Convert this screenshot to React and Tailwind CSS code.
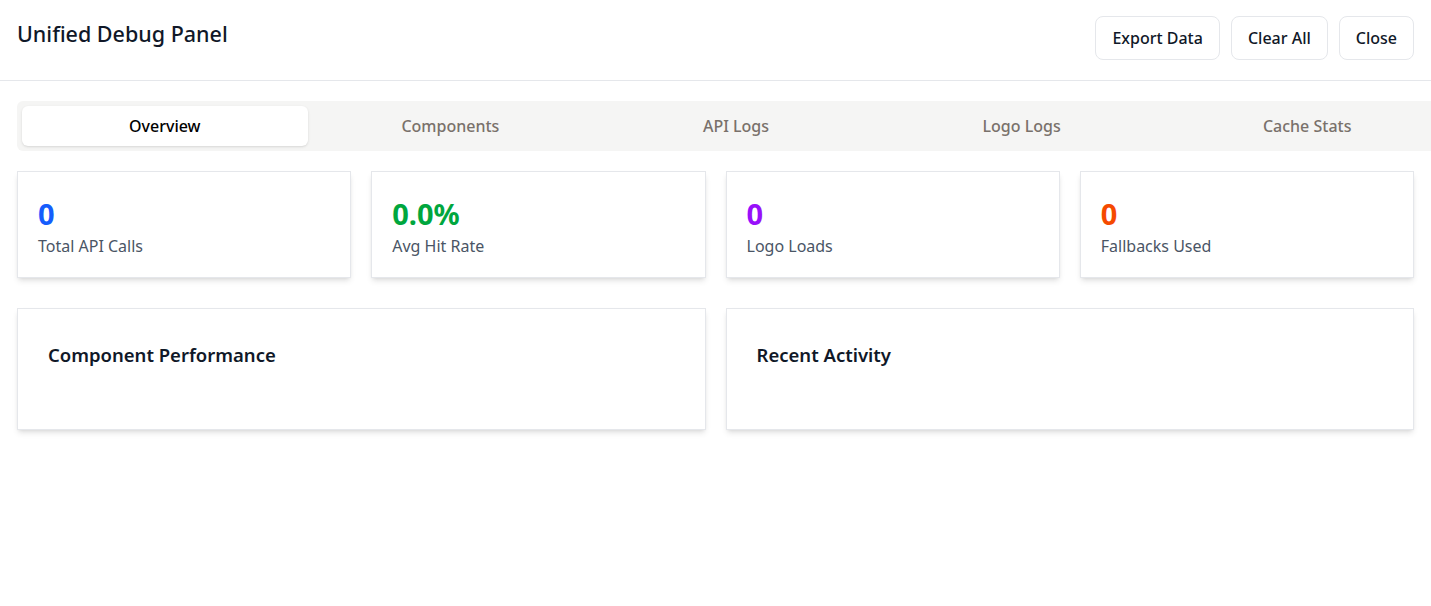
import React, { useState } from 'react';

const tabs = ['Overview', 'Components', 'API Logs', 'Logo Logs', 'Cache Stats'];

const stats = [
    { value: '0', label: 'Total API Calls', color: 'text-blue-600' },
    { value: '0.0%', label: 'Avg Hit Rate', color: 'text-green-600' },
    { value: '0', label: 'Logo Loads', color: 'text-purple-600' },
    { value: '0', label: 'Fallbacks Used', color: 'text-orange-600' },
];

const App = () => {
    const [activeTab, setActiveTab] = useState('Overview');

    return (
        <div className="w-[1431px] min-h-[606px] bg-white overflow-hidden text-black" style={{ fontFamily: '"Noto Sans", "Open Sans", sans-serif' }}>
            {/* Header */}
            <div className="flex items-start justify-between px-[17px] pt-4 pb-5 border-b border-gray-200">
                <h1 className="mt-1 text-[21.5px] leading-7 font-medium text-gray-900">Unified Debug Panel</h1>
                <div className="flex items-center gap-[11px]">
                    {['Export Data', 'Clear All', 'Close'].map((label) => (
                        <button key={label} className="h-11 px-4 rounded-lg border border-gray-200 bg-white text-base font-medium text-gray-900">
                            {label}
                        </button>
                    ))}
                </div>
            </div>

            <div className="px-[17px] pt-5">
                {/* Tabs */}
                <div className="w-[1438px] grid grid-cols-5 p-[5px] bg-stone-100 rounded-md">
                    {tabs.map((tab) => (
                        <button
                            key={tab}
                            onClick={() => setActiveTab(tab)}
                            className={
                                activeTab === tab
                                    ? 'h-10 rounded-md bg-white shadow-sm text-base font-medium text-black'
                                    : 'h-10 rounded-md text-base font-medium text-stone-500'
                            }
                        >
                            {tab}
                        </button>
                    ))}
                </div>

                {/* Stats */}
                <div className="grid grid-cols-4 gap-5 mt-5">
                    {stats.map((s) => (
                        <div key={s.label} className="border border-gray-200 bg-white shadow-md pt-6 pb-[17px] px-5">
                            <div className={`text-[29px] leading-9 font-bold ${s.color}`}>{s.value}</div>
                            <div className="text-base leading-7 text-gray-600">{s.label}</div>
                        </div>
                    ))}
                </div>

                {/* Panels */}
                <div className="grid grid-cols-2 gap-5 mt-[30px]">
                    <div className="h-[122px] border border-gray-200 bg-white shadow-md pt-8 px-[30px]">
                        <h3 className="text-[18.5px] leading-7 font-semibold text-gray-900">Component Performance</h3>
                    </div>
                    <div className="h-[122px] border border-gray-200 bg-white shadow-md pt-8 px-[30px]">
                        <h3 className="text-[18.5px] leading-7 font-semibold text-gray-900">Recent Activity</h3>
                    </div>
                </div>
            </div>
        </div>
    );
};

export default App;
